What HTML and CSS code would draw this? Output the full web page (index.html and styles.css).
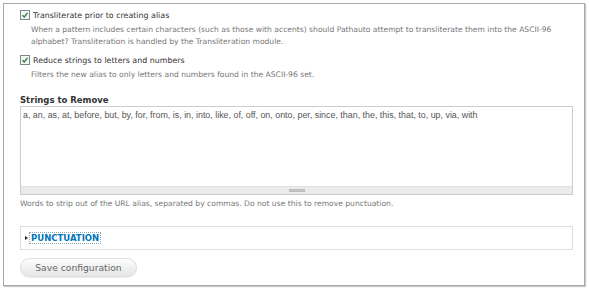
FILE: index.html
```html
<!DOCTYPE html>
<html>
<head>
<meta charset="utf-8">
<link rel="stylesheet" href="styles.css">
</head>
<body>
<div class="frame">
  <div class="item check-item">
    <label class="check-label"><span class="checkbox"><svg viewBox="0 0 8 8" width="8" height="8"><path d="M1.5 4.2 L3.2 6 L6.6 1.8" fill="none" stroke="#2a7a3a" stroke-width="1.3"/></svg></span>Transliterate prior to creating alias</label>
    <div class="desc">When a pattern includes certain characters (such as those with accents) should Pathauto attempt to transliterate them into the ASCII-96 alphabet? Transliteration is handled by the Transliteration module.</div>
  </div>
  <div class="item check-item">
    <label class="check-label"><span class="checkbox"><svg viewBox="0 0 8 8" width="8" height="8"><path d="M1.5 4.2 L3.2 6 L6.6 1.8" fill="none" stroke="#2a7a3a" stroke-width="1.3"/></svg></span>Reduce strings to letters and numbers</label>
    <div class="desc">Filters the new alias to only letters and numbers found in the ASCII-96 set.</div>
  </div>
  <div class="item text-item">
    <div class="field-label">Strings to Remove</div>
    <div class="textarea">
      <div class="textarea-text">a, an, as, at, before, but, by, for, from, is, in, into, like, of, off, on, onto, per, since, than, the, this, that, to, up, via, with</div>
      <div class="grippie"><span class="grip-handle"></span></div>
    </div>
    <div class="desc desc-plain">Words to strip out of the URL alias, separated by commas. Do not use this to remove punctuation.</div>
  </div>
  <div class="fieldset">
    <span class="tri"></span><a class="legend-link" href="#">PUNCTUATION</a>
  </div>
  <div class="actions">
    <button class="btn">Save configuration</button>
  </div>
</div>
</body>
</html>
```
FILE: styles.css
```css
html, body {
  margin: 0;
  padding: 0;
  background: #fff;
}
body {
  padding: 3px;
  font-family: "DejaVu Sans", Verdana, sans-serif;
}
.frame {
  width: 582px;
  height: 283px;
  box-sizing: border-box;
  border: 1px solid #a8a8a8;
  box-shadow: 1px 1px 1px #c8c8c8;
  padding: 5px 13px 0 16px;
}
.check-label {
  display: flex;
  align-items: center;
  font-size: 7.9px;
  color: #333;
  height: 12px;
}
.checkbox {
  display: inline-block;
  width: 8px;
  height: 8px;
  border: 1px solid #7a8a8a;
  background: #f4f6f4;
  margin: 0 3px 0 0;
}
.checkbox svg {
  display: block;
}
.desc {
  font-size: 7.6px;
  color: #777;
  line-height: 12px;
  padding: 3px 0 0 11px;
}
.check-item + .check-item {
  margin-top: 6px;
}
.text-item {
  margin-top: 13px;
}
.field-label {
  font-weight: bold;
  font-size: 8.5px;
  color: #333;
  height: 12px;
  line-height: 13px;
}
.textarea {
  width: 553px;
  height: 89px;
  box-sizing: border-box;
  border: 1px solid #ccc;
  display: flex;
  flex-direction: column;
}
.textarea-text {
  flex: 1;
  font-family: "Liberation Sans", Arial, sans-serif;
  font-size: 8.9px;
  color: #555;
  padding: 3px 2px 0 2px;
}
.grippie {
  height: 7px;
  background: #ebebeb;
  border-top: 1px solid #e0e0e0;
  display: flex;
  justify-content: center;
  align-items: center;
}
.grip-handle {
  width: 16px;
  height: 3px;
  background: #c9c9c9;
  border: 1px solid #bbb;
  box-sizing: border-box;
}
.desc-plain {
  padding: 3px 0 0 0;
}
.fieldset {
  margin-top: 16px;
  width: 553px;
  height: 24px;
  box-sizing: border-box;
  border: 1px solid #ddd;
  display: flex;
  align-items: center;
  padding-left: 4px;
}
.tri {
  width: 0;
  height: 0;
  border-top: 2.5px solid transparent;
  border-bottom: 2.5px solid transparent;
  border-left: 3px solid #222;
  margin-right: 2px;
}
.legend-link {
  font-weight: bold;
  font-size: 8.5px;
  color: #0074bd;
  text-decoration: none;
  outline: 1px dotted #8ab;
  padding: 0 1px;
}
.actions {
  margin-top: 6px;
}
.btn {
  width: 117px;
  height: 19px;
  border: 1px solid #ddd;
  border-radius: 10px;
  background: linear-gradient(#fdfdfd, #e6e6e6);
  color: #666;
  font-family: "DejaVu Sans", Verdana, sans-serif;
  font-size: 9.2px;
  padding: 0;
  box-shadow: 0 1px 1px #eee;
}
```
